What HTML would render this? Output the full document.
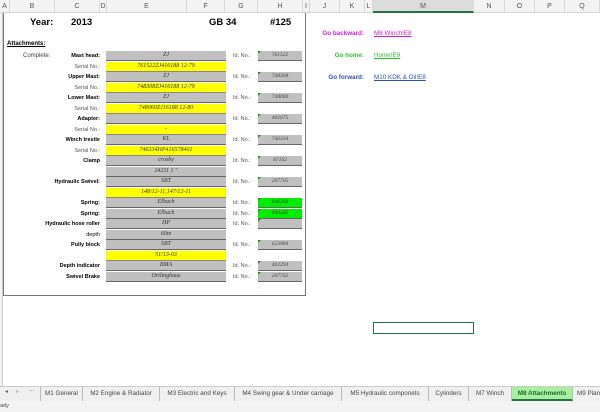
<!DOCTYPE html>
<html><head><meta charset="utf-8"><style>
*{margin:0;padding:0;box-sizing:border-box}
body{width:600px;height:412px;overflow:hidden;background:#fff;font-family:"Liberation Sans",sans-serif;position:relative}
.a{position:absolute;white-space:nowrap}
.hdr{position:absolute;top:0;left:0;width:600px;height:13px;background:#f3f3f3;border-bottom:1px solid #d4d4d4}
.hc{position:absolute;top:0;height:13px;font-size:7px;color:#555;text-align:center;line-height:13px;border-right:1px solid #d8d8d8}
.lbl{position:absolute;font-size:5.5px;text-align:right;width:100px;left:0;line-height:10px}
.g{position:absolute;left:106px;width:120px;height:10px;background:#c0c0c0;border-bottom:1px solid #666;font-family:"Liberation Serif",serif;font-style:italic;font-size:6px;text-align:center;line-height:9px;color:#333}
.y{background:#ffff00;border-bottom:1px solid #888}
.id{position:absolute;left:233px;font-size:5.5px;color:#555;line-height:10px}
.ib{position:absolute;left:258px;width:44px;height:10px;background:#c0c0c0;border-bottom:1px solid #666;font-family:"Liberation Serif",serif;font-style:italic;font-size:5.5px;text-align:center;line-height:9px;color:#444}
.ib:before{content:"";position:absolute;left:0;top:0;border-top:3px solid #2a8a2a;border-right:3px solid transparent}
.tab{position:absolute;top:387px;height:14px;font-size:6.3px;color:#444;line-height:13px;text-align:center;border-right:1px solid #bbb}
</style></head><body>
<div class="hdr"></div>
<div class="hc" style="left:0;width:10px">A</div>
<div class="hc" style="left:10px;width:45px">B</div>
<div class="hc" style="left:55px;width:45px">C</div>
<div class="hc" style="left:100px;width:7px">D</div>
<div class="hc" style="left:107px;width:80px">E</div>
<div class="hc" style="left:187px;width:38px">F</div>
<div class="hc" style="left:225px;width:33px">G</div>
<div class="hc" style="left:258px;width:45px">H</div>
<div class="hc" style="left:303px;width:7px">I</div>
<div class="hc" style="left:310px;width:30px">J</div>
<div class="hc" style="left:340px;width:25px">K</div>
<div class="hc" style="left:365px;width:8px">L</div>
<div class="hc" style="left:373px;width:101px;background:#dcdcdc;border-bottom:2px solid #217346">M</div>
<div class="hc" style="left:474px;width:31px">N</div>
<div class="hc" style="left:505px;width:30px">O</div>
<div class="hc" style="left:535px;width:30px">P</div>
<div class="hc" style="left:565px;width:35px">Q</div>
<div class="a" style="left:0;top:13px;width:3px;height:374px;background:#f3f3f3;border-right:1px solid #ccc"></div>
<div class="a" style="left:3px;top:13px;width:303px;height:283px;border:1px solid #777;border-top:none"></div>

<div class="a" style="left:30px;top:17px;font-size:9.5px;font-weight:bold">Year:</div>
<div class="a" style="left:71px;top:17px;font-size:9.5px;font-weight:bold">2013</div>
<div class="a" style="left:209px;top:17px;font-size:9.5px;font-weight:bold">GB 34</div>
<div class="a" style="left:270px;top:17px;font-size:9.5px;font-weight:bold">#125</div>
<div class="a" style="left:7px;top:41px;font-size:6px;font-weight:bold;text-decoration:underline">Attachments:</div>
<div class="a" style="left:23px;top:51px;font-size:6px;color:#444;line-height:10px">Complete:</div>

<div class="lbl" style="top:51px;font-weight:bold">Mast head:</div>
<div class="g" style="top:51px">ZJ</div><div class="id" style="top:51px">Id. No.:</div><div class="ib" style="top:51px">761522</div>
<div class="lbl" style="top:61.5px;color:#555">Serial No.:</div>
<div class="g y" style="top:61.5px">761522ZJ416188 12-79</div>
<div class="lbl" style="top:72px;font-weight:bold">Upper Mast:</div>
<div class="g" style="top:72px">ZJ</div><div class="id" style="top:72px">Id. No.:</div><div class="ib" style="top:72px">748308</div>
<div class="lbl" style="top:82.5px;color:#555">Serial No.:</div>
<div class="g y" style="top:82.5px">748308ZJ416188 12-79</div>
<div class="lbl" style="top:93px;font-weight:bold">Lower Mast:</div>
<div class="g" style="top:93px">ZJ</div><div class="id" style="top:93px">Id. No.:</div><div class="ib" style="top:93px">748060</div>
<div class="lbl" style="top:103.5px;color:#555">Serial No.:</div>
<div class="g y" style="top:103.5px">748060ZJ16188 12-80</div>
<div class="lbl" style="top:114px;font-weight:bold">Adapter:</div>
<div class="g" style="top:114px"></div><div class="id" style="top:114px">Id. No.:</div><div class="ib" style="top:114px">402675</div>
<div class="lbl" style="top:124.5px;color:#555">Serial No.:</div>
<div class="g y" style="top:124.5px">-</div>
<div class="lbl" style="top:135px;font-weight:bold">Winch trestle</div>
<div class="g" style="top:135px">KL</div><div class="id" style="top:135px">Id. No.:</div><div class="ib" style="top:135px">746334</div>
<div class="lbl" style="top:145.5px;color:#555">Serial No.:</div>
<div class="g y" style="top:145.5px">746334HP416578401</div>
<div class="lbl" style="top:156px;font-weight:bold">Clamp</div>
<div class="g" style="top:156px">crosby</div><div class="id" style="top:156px">Id. No.:</div><div class="ib" style="top:156px">87162</div>
<div class="g" style="top:166.5px">24211 1 "</div>
<div class="lbl" style="top:177px;font-weight:bold">Hydraulic Swivel:</div>
<div class="g" style="top:177px">SBT</div><div class="id" style="top:177px">Id. No.:</div><div class="ib" style="top:177px">207705</div>
<div class="g y" style="top:187.5px">148/12-11,147/12-11</div>
<div class="lbl" style="top:198px;font-weight:bold">Spring:</div>
<div class="g" style="top:198px">Elbach</div><div class="id" style="top:198px">Id. No.:</div><div class="ib" style="top:198px;background:#00ee00">846268</div>
<div class="lbl" style="top:208.5px;font-weight:bold">Spring:</div>
<div class="g" style="top:208.5px">Elbach</div><div class="id" style="top:208.5px">Id. No.:</div><div class="ib" style="top:208.5px;background:#00ee00">840385</div>
<div class="lbl" style="top:219px;font-weight:bold">Hydraulic hose roller</div>
<div class="g" style="top:219px">HP</div><div class="id" style="top:219px">Id. No.:</div><div class="ib" style="top:219px"></div>
<div class="lbl" style="top:229.5px">depth</div>
<div class="g" style="top:229.5px">60m</div>
<div class="lbl" style="top:240px;font-weight:bold">Pully block</div>
<div class="g" style="top:240px">SBT</div><div class="id" style="top:240px">Id. No.:</div><div class="ib" style="top:240px">623984</div>
<div class="g y" style="top:250.5px">51/13-03</div>
<div class="lbl" style="top:261px;font-weight:bold">Depth indicator</div>
<div class="g" style="top:261px">BMA</div><div class="id" style="top:261px">Id. No.:</div><div class="ib" style="top:261px">402294</div>
<div class="lbl" style="top:271.5px;font-weight:bold">Swivel Brake</div>
<div class="g" style="top:271.5px">Ortlinghaus</div><div class="id" style="top:271.5px">Id. No.:</div><div class="ib" style="top:271.5px">207702</div>

<div class="a" style="left:300px;width:64px;text-align:right;top:30px;font-size:6.3px;font-weight:bold;color:#d020d0">Go backward:</div>
<div class="a" style="left:374px;top:30px;font-size:6.3px;color:#d020d0;text-decoration:underline">M8 Winch!E8</div>
<div class="a" style="left:300px;width:64px;text-align:right;top:52px;font-size:6.3px;font-weight:bold;color:#30c030">Go home:</div>
<div class="a" style="left:374px;top:52px;font-size:6.3px;color:#30c030;text-decoration:underline">Home!E9</div>
<div class="a" style="left:300px;width:64px;text-align:right;top:74px;font-size:6.3px;font-weight:bold;color:#3050b0">Go forward:</div>
<div class="a" style="left:374px;top:74px;font-size:6.3px;color:#3050b0;text-decoration:underline">M10 KDK &amp; Oil!E8</div>

<div class="a" style="left:373px;top:322px;width:101px;height:12px;border:1.5px solid #217346"></div>

<div class="a" style="left:0;top:386px;width:600px;height:15px;background:#f0f0f0;border-top:1px solid #ccc"></div>
<div class="a" style="left:5px;top:388px;font-size:6px;color:#666">◂</div>
<div class="a" style="left:16px;top:388px;font-size:6px;color:#bbb">▸</div>
<div class="a" style="left:29px;top:387px;font-size:6px;color:#666">...</div>
<div class="tab" style="left:40px;width:43px;border-left:1px solid #bbb">M1 General</div>
<div class="tab" style="left:83px;width:77px">M2 Engine &amp; Radiator</div>
<div class="tab" style="left:160px;width:75px">M3 Electric and Keys</div>
<div class="tab" style="left:235px;width:107px">M4 Swing gear &amp; Under carriage</div>
<div class="tab" style="left:342px;width:87px">M5 Hydraulic componets</div>
<div class="tab" style="left:429px;width:40px">Cylinders</div>
<div class="tab" style="left:469px;width:43px">M7 Winch</div>
<div class="tab" style="left:512px;width:61px;background:#a8f0a0;color:#1a6a2a;font-weight:bold;border-bottom:2px solid #217346">M8 Attachments</div>
<div class="tab" style="left:573px;width:40px;text-align:left;padding-left:4px">M9 Plan</div>
<div class="a" style="left:0;top:401px;width:600px;height:11px;background:#f3f3f3"></div>
<div class="a" style="left:0;top:403px;font-size:5.5px;color:#444">ady</div>
</body></html>
